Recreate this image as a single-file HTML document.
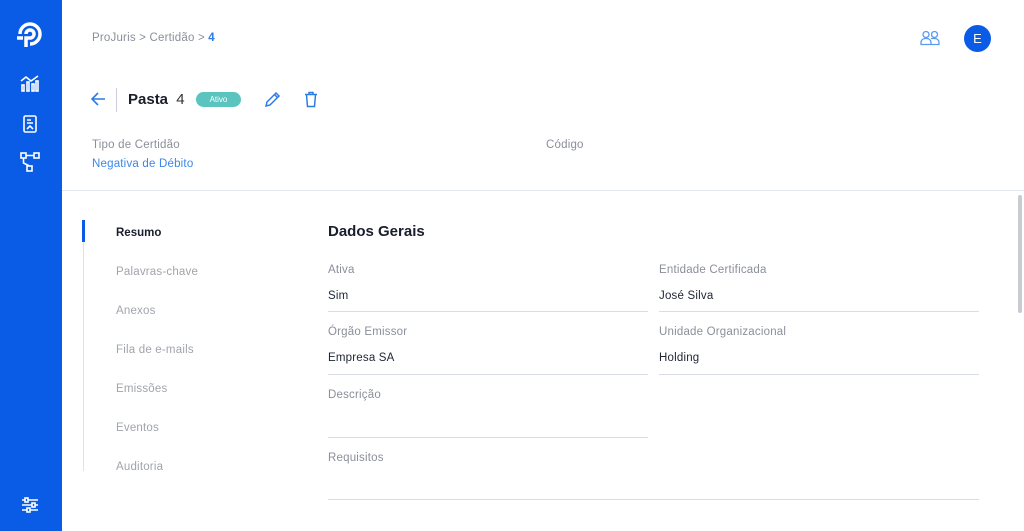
<!DOCTYPE html>
<html><head><meta charset="utf-8"><style>
*{margin:0;padding:0;box-sizing:border-box}
body{width:1024px;height:531px;overflow:hidden;background:#fff;font-family:"Liberation Sans",sans-serif;position:relative}
.sb{position:absolute;left:0;top:0;width:62px;height:531px;background:#0a5ce6}
.a{position:absolute;white-space:nowrap}
.g{color:#8a8f99;font-size:11.5px;letter-spacing:0.2px}
.v{color:#1f2433;font-size:11.5px;letter-spacing:0.2px}
.line{position:absolute;height:1px;background:#d8dde6}
.nav{position:absolute;left:116px;color:#a0a4ab;font-size:11.5px;letter-spacing:0.2px}
</style></head><body>
<div class="sb">
<svg class="a" style="left:16px;top:20px" width="28" height="28" viewBox="0 0 28 28" fill="none" stroke="#fff" stroke-width="3.5"><path d="M4 14 A10 10 0 1 1 14 24"/><path d="M10 14 A4 4 0 1 1 14 18 H10 V27"/><path d="M1 18 H7"/></svg>
<svg class="a" style="left:20px;top:74px" width="20" height="18" viewBox="0 0 20 18" fill="none" stroke="#fff" stroke-width="1.6"><path d="M1 7 L6 3 L11 7 L18 2"/><rect x="2" y="11" width="2" height="6"/><rect x="7" y="8" width="2" height="9"/><rect x="12" y="10" width="2" height="7"/><rect x="16" y="7" width="2" height="10"/></svg>
<svg class="a" style="left:23px;top:115px" width="14" height="18" viewBox="0 0 14 18" fill="none" stroke="#fff" stroke-width="1.6"><rect x="1" y="1" width="12" height="16" rx="1.5"/><path d="M4 5h4M4 8h6M4 14l3-3 3 3"/></svg>
<svg class="a" style="left:20px;top:152px" width="20" height="20" viewBox="0 0 20 20" fill="none" stroke="#fff" stroke-width="1.6"><rect x="1" y="1" width="5" height="5"/><rect x="14" y="1" width="5" height="5"/><rect x="7" y="14" width="5" height="5"/><path d="M6 3.5h8M3.5 6v5l6 3"/></svg>
<svg class="a" style="left:21px;top:497px" width="18" height="16" viewBox="0 0 18 16" fill="none" stroke="#fff" stroke-width="1.6"><path d="M1 3h16M1 8h16M1 13h16"/><rect x="4" y="1" width="3" height="4" fill="#0a5ce6"/><rect x="11" y="6" width="3" height="4" fill="#0a5ce6"/><rect x="6" y="11" width="3" height="4" fill="#0a5ce6"/></svg>
</div>
<div class="a" style="left:92px;top:32px;font-size:11.5px;color:#8a8f99;letter-spacing:0.2px">ProJuris &gt; Certidão &gt; <b style="color:#2d7be5">4</b></div>
<svg class="a" style="left:920px;top:30px" width="21" height="16" viewBox="0 0 21 16" fill="none" stroke="#5a9bf0" stroke-width="1.3"><circle cx="6" cy="4.5" r="3"/><circle cx="14.5" cy="4.5" r="3"/><path d="M1 14.5v-2a4 4 0 0 1 4-4h2a4 4 0 0 1 4 4v2zM11 8.5h4a4 4 0 0 1 4 4v2h-8"/></svg>
<div class="a" style="left:964px;top:25px;width:27px;height:27px;border-radius:50%;background:#0a5ce6;color:#fff;font-size:13px;text-align:center;line-height:27px">E</div>
<svg class="a" style="left:91px;top:92px" width="15" height="14" viewBox="0 0 15 14" fill="none" stroke="#2d7be5" stroke-width="1.6"><path d="M14 7H2M7 1L1 7l6 6"/></svg>
<div class="a" style="left:116px;top:88px;width:1px;height:24px;background:#ccd"></div>
<div class="a" style="left:128px;top:91px;font-size:15px;font-weight:bold;color:#1a1d2b">Pasta <span style="font-weight:normal;color:#333;margin-left:4px">4</span></div>
<div class="a" style="left:196px;top:92px;width:45px;height:15px;border-radius:8px;background:#5bc4bf;color:#fff;font-size:8px;text-align:center;line-height:15px">Ativo</div>
<svg class="a" style="left:264px;top:91px" width="17" height="17" viewBox="0 0 17 17" fill="none" stroke="#2d7be5" stroke-width="1.5"><path d="M2 15l1-4 9-9 3 3-9 9zM10.5 3.5l3 3"/></svg>
<svg class="a" style="left:304px;top:91px" width="14" height="17" viewBox="0 0 14 17" fill="none" stroke="#2d7be5" stroke-width="1.5"><path d="M1 3.5h12M5 3.5V1.5h4v2M2.5 3.5l1 12h7l1-12"/></svg>
<div class="a g" style="left:92px;top:139px">Tipo de Certidão</div>
<div class="a" style="left:92px;top:158px;font-size:11.5px;color:#3b87e8;letter-spacing:0.2px">Negativa de Débito</div>
<div class="a g" style="left:546px;top:139px">Código</div>
<div class="line" style="left:62px;top:190px;width:962px;background:#e2e6ee"></div>
<div class="a" style="left:83px;top:220px;width:1px;height:251px;background:#dde1e8"></div>
<div class="a" style="left:82px;top:220px;width:3px;height:22px;background:#0a5ce6"></div>
<div class="a" style="left:116px;top:227px;font-size:11.5px;font-weight:bold;color:#1a1d2b">Resumo</div>
<div class="nav" style="top:266px">Palavras-chave</div>
<div class="nav" style="top:305px">Anexos</div>
<div class="nav" style="top:344px">Fila de e-mails</div>
<div class="nav" style="top:383px">Emissões</div>
<div class="nav" style="top:422px">Eventos</div>
<div class="nav" style="top:461px">Auditoria</div>
<div class="a" style="left:328px;top:223px;font-size:15px;font-weight:bold;color:#1a1d2b">Dados Gerais</div>
<div class="a g" style="left:328px;top:264px">Ativa</div><div class="a v" style="left:328px;top:290px">Sim</div><div class="line" style="left:328px;top:311px;width:320px"></div>
<div class="a g" style="left:659px;top:264px">Entidade Certificada</div><div class="a v" style="left:659px;top:290px">José Silva</div><div class="line" style="left:659px;top:311px;width:320px"></div>
<div class="a g" style="left:328px;top:326px">Órgão Emissor</div><div class="a v" style="left:328px;top:352px">Empresa SA</div><div class="line" style="left:328px;top:374px;width:320px"></div>
<div class="a g" style="left:659px;top:326px">Unidade Organizacional</div><div class="a v" style="left:659px;top:352px">Holding</div><div class="line" style="left:659px;top:374px;width:320px"></div>
<div class="a g" style="left:328px;top:389px">Descrição</div><div class="line" style="left:328px;top:437px;width:320px"></div>
<div class="a g" style="left:328px;top:452px">Requisitos</div><div class="line" style="left:328px;top:499px;width:651px"></div>
<div class="a" style="left:1018px;top:195px;width:4px;height:118px;border-radius:2px;background:#c8ccd2"></div>
</body></html>
